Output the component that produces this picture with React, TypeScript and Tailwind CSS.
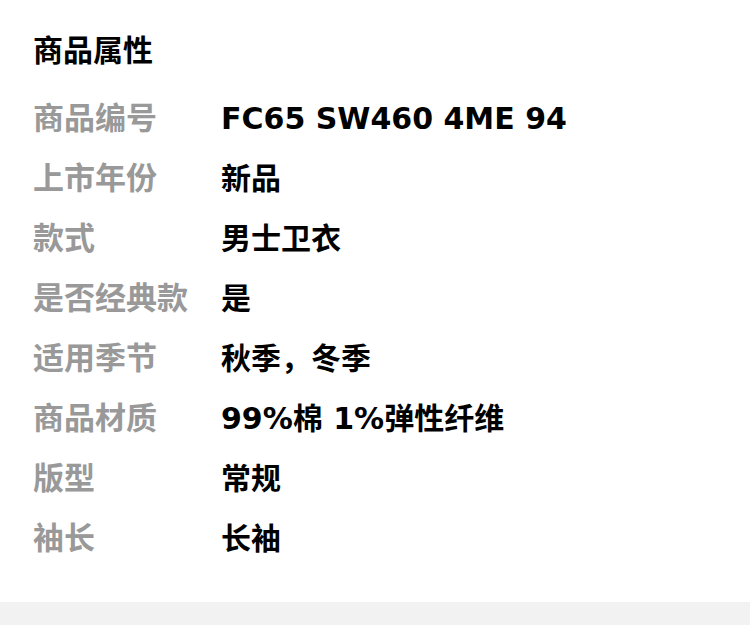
const rows: [string, string][] = [
  ["商品编号", "FC65 SW460 4ME 94"],
  ["上市年份", "新品"],
  ["款式", "男士卫衣"],
  ["是否经典款", "是"],
  ["适用季节", "秋季，冬季"],
  ["商品材质", "99%棉 1%弹性纤维"],
  ["版型", "常规"],
  ["袖长", "长袖"],
];

export default function App() {
  return (
    <div
      className="w-[750px] min-h-[625px] bg-[#f2f2f2]"
      style={{ fontFamily: '"Noto Sans CJK SC", "Noto Sans", sans-serif' }}
    >
      <section className="bg-white px-[33px] pt-[28px] pb-[36px]">
        <h2 className="h-[40px] flex items-center text-[30px] font-bold text-black leading-none">
          商品属性
        </h2>
        <div className="mt-[18px]">
          {rows.map(([label, value]) => (
            <div key={label} className="h-[60px] text-[30px] leading-[60px] whitespace-nowrap">
              <span className="inline-block w-[188px] text-[31px] font-bold text-[#999999]">
                {label}
              </span>
              <span className="font-bold text-black font-['DejaVu_Sans','Noto_Sans_CJK_SC',sans-serif]">
                {value}
              </span>
            </div>
          ))}
        </div>
      </section>
    </div>
  );
}
